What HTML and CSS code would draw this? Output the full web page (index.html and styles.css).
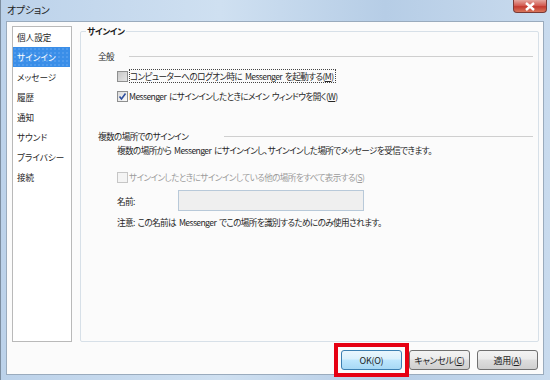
FILE: index.html
```html
<!DOCTYPE html>
<html lang="ja">
  <head>
    <meta charset="UTF-8" />
    <title>オプション</title>
    <link rel="stylesheet" href="styles.css">
  </head>
  <body>
    <div class="window">
      <div class="titlebar">
        <span class="title">オプション</span>
        <span class="close-btn">
          <svg width="12" height="9" viewBox="0 0 12 9">
            <path d="M2 1 L10 8 M10 1 L2 8" stroke="#fff" stroke-width="2.4" />
          </svg>
        </span>
      </div>
      <div class="client">
        <div class="main">
          <ul class="sidebar">
            <li>個人設定</li>
            <li class="selected">サインイン</li>
            <li>メッセージ</li>
            <li>履歴</li>
            <li>通知</li>
            <li>サウンド</li>
            <li>プライバシー</li>
            <li>接続</li>
          </ul>
          <div class="group">
            <div class="group-title">サインイン</div>
            <div class="section-head first">
              <span>全般</span>
              <span class="rule rule-short"></span>
            </div>
            <div class="check-row row1">
              <span class="box box-hover"></span>
              <span class="focus">コンピューターへのログオン時に Messenger を起動する(<u>M</u>)</span>
            </div>
            <div class="check-row row2">
              <span class="box">
                <svg width="9" height="9" viewBox="0 0 9 9">
                  <path d="M1.5 4.5 L3.5 7 L7.5 1.5" fill="none" stroke="#2e4f9e" stroke-width="1.6" />
                </svg>
              </span>
              <span>Messenger にサインインしたときにメイン ウィンドウを開く(<u>W</u>)</span>
            </div>
            <div class="section-head second">
              <span>複数の場所でのサインイン</span>
              <span class="rule rule-long"></span>
            </div>
            <p class="desc">複数の場所から Messenger にサインインし、サインインした場所でメッセージを受信できます。</p>
            <div class="check-row row3 disabled">
              <span class="box"></span>
              <span>サインインしたときにサインインしている他の場所をすべて表示する(<u>S</u>)</span>
            </div>
            <div class="name-row">
              <span class="name-label">名前:</span>
              <span class="name-input"></span>
            </div>
            <p class="note">注意: この名前は Messenger でこの場所を識別するためにのみ使用されます。</p>
          </div>
        </div>
        <div class="buttons">
          <span class="mark">
            <button class="btn btn-default">OK(O)</button>
          </span>
          <button class="btn">キャンセル(<u>C</u>)</button>
          <button class="btn">適用(<u>A</u>)</button>
        </div>
      </div>
    </div>
  </body>
</html>
```

FILE: styles.css
```css
body {
  margin: 0;
  font-family: "Noto Sans CJK JP", "Noto Sans", sans-serif;
  font-size: 8.6px;
  font-feature-settings: "palt";
  letter-spacing: -0.6px;
  word-spacing: 1.5px;
  color: #262626;
}

.window {
  width: 550px;
  height: 380px;
  box-sizing: border-box;
  padding: 0 6px 5px 5px;
  background: linear-gradient(90deg, #bcd2ea 0%, #cfe0f1 40%, #b6cde6 70%, #c9dbee 100%);
  border-left: 1px solid #7d8ea0;
  display: flex;
  flex-direction: column;
}

.titlebar {
  height: 21px;
  display: flex;
  align-items: flex-start;
  justify-content: space-between;
}

.title {
  margin: 3px 0 0 1px;
  font-size: 10px;
  letter-spacing: -0.3px;
  line-height: 14px;
  color: #1e1e1e;
}

.close-btn {
  width: 34px;
  height: 13px;
  margin-right: -3px;
  box-sizing: border-box;
  border: 1px solid #7a3a36;
  border-top: none;
  border-radius: 0 0 4px 4px;
  background: linear-gradient(#e5a69f, #d1554b 50%, #c33a30 55%, #d9765c);
  display: flex;
  align-items: center;
  justify-content: center;
}

.client {
  flex: 1;
  border: 1px solid #9aabbd;
  background: #fbfbfb;
  display: flex;
  flex-direction: column;
}

.main {
  display: flex;
  align-items: flex-start;
  padding-left: 5px;
}

.sidebar {
  list-style: none;
  margin: 4px 0 0 0;
  padding: 0;
  width: 60px;
  height: 316px;
  box-sizing: border-box;
  border: 1px solid #b9b9b9;
  background: #fff;
  padding-right: 1px;
  letter-spacing: 0;
}

.sidebar li {
  height: 20px;
  line-height: 20px;
  padding-left: 4px;
}

.sidebar li.selected {
  background-color: #3a8ee8;
  background-image: radial-gradient(#6aaaf0 0.6px, transparent 0.8px);
  background-size: 4px 4px;
  color: #fff;
}

.group {
  margin: 9px 0 0 8px;
  width: 459px;
  height: 311px;
  box-sizing: border-box;
  border: 1px solid #d7e0e8;
  border-radius: 2px;
  padding: 0 5px 0 17px;
}

.group-title {
  display: inline-block;
  margin: -7px 0 0 -12px;
  padding: 0 1px;
  line-height: 12px;
  height: 12px;
  font-weight: bold;
  letter-spacing: -0.3px;
  background: #fbfbfb;
  color: #1a1a1a;
  vertical-align: top;
}

.section-head {
  display: flex;
  align-items: center;
  line-height: 14px;
  height: 14px;
}

.section-head.first {
  margin-top: 5px;
}

.section-head.second {
  margin-top: 26px;
}

.rule {
  flex: 1;
  border-top: 1px solid #cfcfcf;
}

.rule-short {
  margin-left: 15px;
}

.rule-long {
  margin-left: 36px;
}

.check-row {
  display: flex;
  align-items: center;
  gap: 1px;
  height: 14px;
  line-height: 14px;
  margin-left: 19px;
  margin-top: 6px;
}

.row3 {
  margin-top: 13px;
}

.box {
  width: 9px;
  height: 9px;
  border: 1px solid #8e8f8f;
  background: linear-gradient(135deg, #dcdcdc, #fafafa);
  display: flex;
  align-items: center;
  justify-content: center;
  flex-shrink: 0;
}

.box-hover {
  background: linear-gradient(135deg, #c8c8c8, #e6e6e6);
}

.focus {
  outline: 1px dotted #444;
  outline-offset: -1px;
  padding: 0 2px 0 1px;
}

.disabled {
  color: #9b9b9b;
}

.disabled .box {
  border-color: #c6c6c6;
  background: #f4f4f4;
}

.desc,
.note {
  margin: 0 0 0 19px;
  line-height: 14px;
  height: 14px;
}

.name-row {
  display: flex;
  align-items: center;
  margin: 6px 0 0 19px;
  height: 21px;
}

.name-label {
  width: 61px;
}

.name-input {
  width: 186px;
  height: 21px;
  box-sizing: border-box;
  border: 1px solid #b8c9d9;
  background: #efefef;
}

.note {
  margin-top: 4px;
}

.buttons {
  display: flex;
  justify-content: flex-end;
  gap: 7px;
  margin-top: 8px;
  padding-right: 5px;
}

.mark {
  display: flex;
  margin: -7px;
  padding: 3px;
  border: 4px solid #e60012;
}

.btn {
  width: 61px;
  height: 20px;
  padding: 0;
  font-family: inherit;
  font-size: 9px;
  font-feature-settings: "palt";
  letter-spacing: -0.3px;
  color: #1e1e1e;
  border: 1px solid #707070;
  border-radius: 3px;
  background: linear-gradient(#f3f3f3 0%, #ebebeb 45%, #dddddd 50%, #cfcfcf 100%);
}

.btn-default {
  border-color: #3c7fb1;
  background: linear-gradient(#eaf6fd 0%, #d9f0fc 45%, #bee6fd 50%, #a7d9f5 100%);
}
```
